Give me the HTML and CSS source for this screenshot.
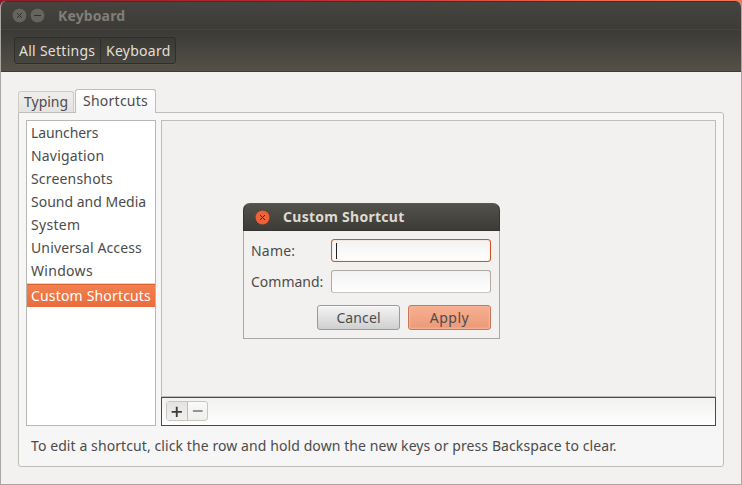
FILE: index.html
```html
<!DOCTYPE html>
<html lang="en">
<head>
<meta charset="utf-8">
<title>Keyboard</title>
<link rel="stylesheet" href="styles.css">
</head>
<body>
<div class="window">
  <header class="titlebar">
    <svg class="round" viewBox="0 0 15 15"><circle cx="7.5" cy="7.5" r="7.3"/><path d="M5 5l5 5M10 5l-5 5"/></svg>
    <svg class="round" viewBox="0 0 15 15"><circle cx="7.5" cy="7.5" r="7.3"/><path d="M4 7.5h7"/></svg>
    <h1 class="title">Keyboard</h1>
  </header>
  <nav class="toolbar">
    <div class="crumbs"><span class="crumb crumb-all">All Settings</span><span class="crumb crumb-kb">Keyboard</span></div>
  </nav>
  <main class="content">
    <div class="tabs"><div class="tab typing">Typing</div><div class="tab active">Shortcuts</div></div>
    <section class="panel">
      <div class="columns">
        <ul class="list">
          <li><span class="launchers">Launchers</span></li>
          <li><span class="navigation">Navigation</span></li>
          <li><span class="screenshots">Screenshots</span></li>
          <li><span class="sound">Sound and Media</span></li>
          <li><span class="system">System</span></li>
          <li><span class="access">Universal Access</span></li>
          <li><span class="windows">Windows</span></li>
          <li class="selected"><span class="custom">Custom Shortcuts</span></li>
        </ul>
        <div class="detail">
          <div class="bindings"></div>
          <div class="actions">
            <div class="buttons">
              <svg class="tool pressed" viewBox="0 0 21 18"><path d="M5 10h11M10.5 4.5v11"/></svg>
              <svg class="tool" viewBox="0 0 20 18"><path d="M5 9h10"/></svg>
            </div>
          </div>
        </div>
      </div>
      <p class="hint">To edit a shortcut, click the row and hold down the new keys or press Backspace to clear.</p>
    </section>
  </main>
  <div class="dialog">
    <header class="dialog-bar">
      <svg class="round close" viewBox="0 0 15 15"><circle cx="7.5" cy="7.5" r="7.3"/><path d="M5 5l5 5M10 5l-5 5"/></svg>
      <h2 class="dialog-title">Custom Shortcut</h2>
    </header>
    <div class="form">
      <label class="name">Name:</label><div class="field focus"><i class="caret"></i></div>
      <label class="command">Command:</label><div class="field"></div>
    </div>
    <div class="dialog-buttons"><div class="button cancel"><span>Cancel</span></div><div class="button apply"><span>Apply</span></div></div>
  </div>
</div>
</body>
</html>
```
FILE: styles.css
```css
* { box-sizing: border-box; margin: 0; padding: 0; }
body {
  width: 742px; height: 485px; overflow: hidden;
  background: linear-gradient(90deg, #8f1d27, #b52b33 40%, #ef6b50 80%, #f37658);
  font: 14px/23px "Noto Sans", sans-serif; color: #4c4c4c; white-space: nowrap;
}
.window {
  position: relative; height: 484px; margin-top: 1px;
  border: 1px solid #aaa7a2; border-top: 0; border-radius: 6px 6px 0 0;
  background: #f2f1f0; overflow: hidden;
}
.titlebar {
  display: flex; align-items: center; gap: 3px; height: 28px; padding: 0 11px;
  background: linear-gradient(#45443f, #3c3b37); border-top: 1px solid #35342f;
}
.round { width: 15px; height: 15px; fill: #66645e; stroke: #33322e; stroke-width: 1; }
.round circle { stroke: #383733; stroke-width: .5; }
.title { margin-left: 10px; font-size: 14px; line-height: 26px; letter-spacing: .13px; color: #817e77; }
.toolbar {
  height: 43px; padding: 7px 13px;
  background: linear-gradient(#3b3a36, #555148); border-top: 1px solid #45443f; border-bottom: 1px solid #3c3b37;
}
.crumbs {
  display: flex; width: 162px; height: 27px; border: 1px solid #2f2e2b; border-radius: 3px;
  background: linear-gradient(#3b3a36, #484640); box-shadow: 0 1px #57544c; color: #e2dfd7;
}
.crumb { padding-left: 4px; line-height: 26px; letter-spacing: .27px; }
.crumb-all { width: 86px; border-right: 1px solid #302f2c; }
.crumb-kb { padding-left: 5px; }
.content { padding: 17px 17px 0; }
.tabs { position: relative; z-index: 1; display: flex; align-items: flex-end; height: 24px; margin-bottom: -1px; }
.tab {
  width: 56px; height: 21px; margin-bottom: 1px; padding-left: 5px; line-height: 20px;
  border: 1px solid #cfccc7; border-bottom: 0; border-radius: 3px 3px 0 0; background: linear-gradient(#efeeed, #e5e3e1);
}
.tab.active {
  width: 81px; height: 24px; margin: 0 0 0 1px; padding-left: 7px; line-height: 22px; letter-spacing: .25px;
  border-color: #c1beb8; background: linear-gradient(#fff, #f6f6f6);
}
.panel { height: 355px; padding: 7px; border: 1px solid #bfbdb8; border-radius: 0 3px 3px 3px; background: #f6f6f6; }
.columns { display: flex; gap: 5px; height: 306px; }
.list { width: 130px; border: 1px solid #b9b7b2; background: #fff; list-style: none; }
.list li { height: 23px; padding-left: 4px; }
.list .selected {
  height: 23px; margin-top: 2px; line-height: 22px; color: #fff;
  background: linear-gradient(#f3804f, #e96c3c); border-top: 1px solid #dc6433; box-shadow: 0 -1px #d8d5d2;
}
.launchers { letter-spacing: -.1px; }
.navigation, .screenshots { letter-spacing: .18px; }
.system, .windows { letter-spacing: .3px; }
.access { letter-spacing: .13px; }
.custom { letter-spacing: .17px; }
.detail { display: flex; flex-direction: column; width: 555px; }
.bindings { height: 277px; border: 1px solid #bfbdb8; background: #f2f1f0; }
.actions { height: 29px; padding: 3px 4px; border: 1px solid #4a4a4a; background: linear-gradient(#f1f1ef, #fff); }
.buttons { display: flex; width: 42px; height: 20px; border: 1px solid #c9c6c1; border-radius: 3px; background: linear-gradient(#fafafa, #efeeec); }
.tool { width: 20px; height: 18px; fill: none; stroke: #969390; stroke-width: 2; }
.tool.pressed { width: 21px; stroke: #3c3c3c; background: linear-gradient(#e5e3e1, #f1f0ee); border-right: 1px solid #bfbcb7; }
.hint { margin-top: 8px; padding-left: 5px; letter-spacing: .09px; }
.dialog {
  position: absolute; left: 242px; top: 202px; width: 257px; height: 136px;
  border: 1px solid #a9a7a3; border-top: 0; border-radius: 7px 7px 0 0; background: #f2f1f0;
}
.dialog-bar {
  display: flex; align-items: center; height: 28px; margin: 0 -1px; padding-left: 11px;
  border: 1px solid #353430; border-top-color: #5a5850; border-radius: 7px 7px 0 0;
  background: linear-gradient(#52514a, #3c3b37);
}
.close { fill: #ec6239; }
.dialog-title { margin-left: 13px; font-size: 14px; line-height: 26px; letter-spacing: .27px; color: #dfdbd2; }
.form { display: grid; grid-template-columns: 73px 160px; grid-template-rows: 23px 23px; gap: 8px 7px; padding: 8px 0 0 7px; }
.name { letter-spacing: .2px; }
.field { border: 1px solid #aeaba6; border-bottom-color: #c9c6c1; border-radius: 3px; background: linear-gradient(#f2f2f2, #fff); }
.focus { padding: 3px 4px; border-color: #d25425; box-shadow: inset 0 0 1px #e58a66; }
.caret { display: block; width: 1px; height: 16px; background: #222; }
.dialog-buttons { display: flex; gap: 8px; margin: 12px 0 0 73px; }
.button { height: 25px; line-height: 23px; text-align: center; border: 1px solid #9c9a96; border-radius: 3px; background: linear-gradient(#f4f4f4, #cfcfcf); box-shadow: inset 0 1px #fff8; }
.cancel { width: 83px; letter-spacing: .1px; }
.apply { width: 83px; letter-spacing: .5px; border-color: #c9775a; background: linear-gradient(#f6b092, #ec9977); box-shadow: inset 0 0 2px 1px #f8b59a; }
```
